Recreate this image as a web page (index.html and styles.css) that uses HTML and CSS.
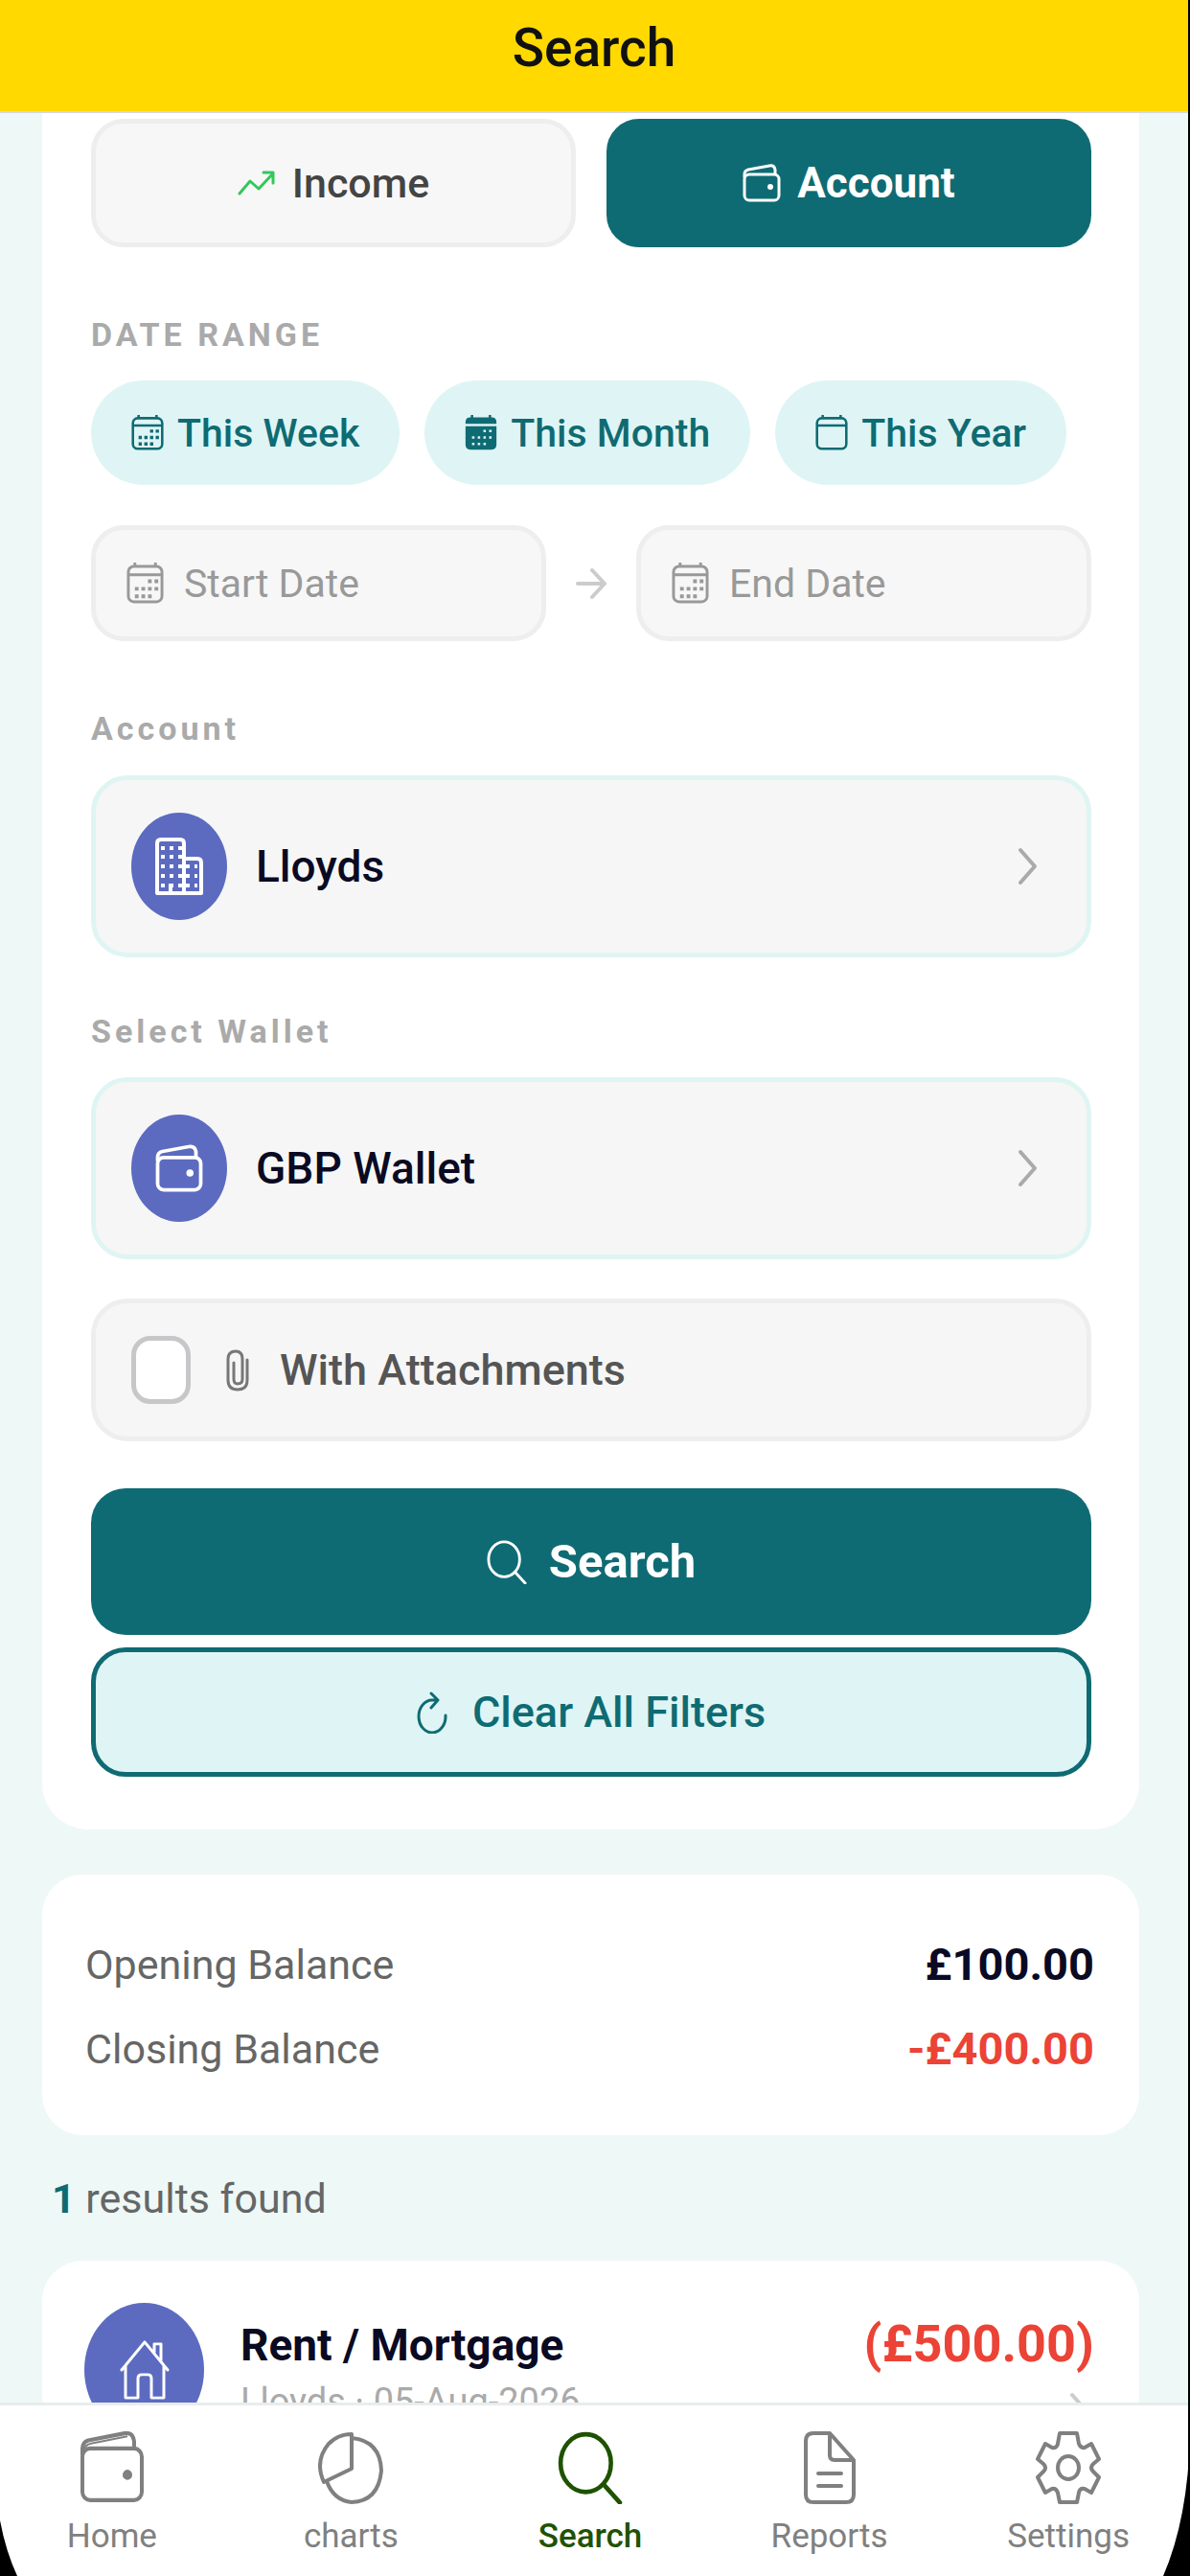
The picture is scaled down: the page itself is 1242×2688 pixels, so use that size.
FILE: index.html
```html
<!DOCTYPE html>
<html lang="en">
<head>
<meta charset="UTF-8" />
<meta name="viewport" content="width=device-width, initial-scale=1" />
<title>Search</title>
<link rel="stylesheet" href="styles.css">
</head>
<body>
  <!-- shared icons -->
  <svg class="sprite" aria-hidden="true">
    <symbol id="i-wallet" viewBox="0 0 68 72" preserveAspectRatio="none">
      <g fill="none" stroke="currentColor" stroke-width="4" stroke-linejoin="round">
        <rect x="3" y="17" width="62" height="51" rx="8" />
        <path d="M3 24V17Q3 11 9 9L47 2Q56 1 57 10V17" />
        <path d="M4 19Q6 13 12 12L50 5" stroke-width="2" />
      </g>
      <ellipse cx="50" cy="43" rx="5" ry="5" fill="currentColor" />
    </symbol>
    <symbol id="i-wallet-small" viewBox="0 0 40 40" preserveAspectRatio="none">
      <g fill="none" stroke="currentColor" stroke-width="3" stroke-linejoin="round">
        <rect x="2" y="11" width="36" height="27" rx="5" />
        <path d="M2 14V11Q2 7 6 6L28 2Q33 1 34 6V11" />
      </g>
      <circle cx="29" cy="24" r="3" fill="currentColor" />
    </symbol>
    <symbol id="i-calendar" viewBox="0 0 40 44" preserveAspectRatio="none">
      <g fill="none" stroke="currentColor" stroke-width="3">
        <rect x="2" y="4" width="36" height="38" rx="6" />
        <path d="M2 13H38M9 0V4M31 0V4" />
      </g>
      <path d="M23 20H34M9 28H34M9 36H27" fill="none" stroke="currentColor" stroke-width="4" stroke-dasharray="4 3" />
    </symbol>
    <symbol id="i-calendar-fill" viewBox="0 0 40 44" preserveAspectRatio="none">
      <path d="M9 0V4M31 0V4" stroke="currentColor" stroke-width="3" />
      <path d="M7 3H33Q39 3 39 9V11H1V9Q1 3 7 3ZM1 14H39V37Q39 43 33 43H7Q1 43 1 37Z" fill="currentColor" />
      <path d="M23 20H34M9 28H34M9 36H27" fill="none" stroke="#dff5f5" stroke-width="3" stroke-dasharray="3 4" />
    </symbol>
    <symbol id="i-calendar-clear" viewBox="0 0 40 44" preserveAspectRatio="none">
      <g fill="none" stroke="currentColor" stroke-width="3">
        <rect x="2" y="4" width="36" height="38" rx="6" />
        <path d="M2 13H38M9 0V4M31 0V4" />
      </g>
    </symbol>
    <symbol id="i-search" viewBox="0 0 44 48" preserveAspectRatio="none">
      <ellipse cx="19" cy="21" rx="17" ry="19" fill="none" stroke="currentColor" stroke-width="3" />
      <path d="M31 35L42 47" stroke="currentColor" stroke-width="3" stroke-linecap="round" />
    </symbol>
    <symbol id="i-chevron" viewBox="0 0 22 40">
      <path d="M3 3L18 20L3 37" fill="none" stroke="currentColor" stroke-width="4" stroke-linecap="round" stroke-linejoin="round" />
    </symbol>
  </svg>

  <div class="app">
    <header>
      <h1>Search</h1>
    </header>

    <main>
      <form class="card filters">
        <div class="types">
          <button type="button" class="type">
            <svg class="icon-trend" viewBox="0 0 40 28"><path d="M2 25L13 12L22 20L37 4M27 3H37V14" fill="none" stroke="currentColor" stroke-width="3" stroke-linecap="round" stroke-linejoin="round" /></svg>
            Income
          </button>
          <button type="button" class="type active">
            <svg class="icon-wallet"><use href="#i-wallet-small" /></svg>
            Account
          </button>
        </div>

        <h2 class="label">DATE RANGE</h2>
        <div class="chips">
          <button type="button" class="chip"><svg><use href="#i-calendar" /></svg>This Week</button>
          <button type="button" class="chip"><svg><use href="#i-calendar-fill" /></svg>This Month</button>
          <button type="button" class="chip"><svg><use href="#i-calendar-clear" /></svg>This Year</button>
        </div>

        <div class="dates">
          <label class="date">
            <svg><use href="#i-calendar" /></svg>
            <input type="text" placeholder="Start Date" aria-label="Start Date" />
          </label>
          <svg class="arrow" viewBox="0 0 32 34"><path d="M2 17H30M17 3L30 17L17 31" fill="none" stroke="currentColor" stroke-width="4" stroke-linecap="round" stroke-linejoin="round" /></svg>
          <label class="date">
            <svg><use href="#i-calendar" /></svg>
            <input type="text" placeholder="End Date" aria-label="End Date" />
          </label>
        </div>

        <h2 class="label">Account</h2>
        <button type="button" class="picker">
          <span class="badge">
            <svg class="icon-building" viewBox="0 0 50 60" preserveAspectRatio="none">
              <path d="M2 58V6Q2 2 6 2H26Q30 2 30 6V58ZM30 22H44Q48 22 48 26V58H30M16 58V48" fill="none" stroke="currentColor" stroke-width="4" stroke-linejoin="round" />
              <path d="M6 11H28M6 20H28M6 30H28M6 40H28M6 50H28M32 30H44M32 40H44M32 50H44" fill="none" stroke="currentColor" stroke-width="4" stroke-dasharray="4 5" />
            </svg>
          </span>
          <span class="name">Lloyds</span>
          <svg class="chevron"><use href="#i-chevron" /></svg>
        </button>

        <h2 class="label">Select Wallet</h2>
        <button type="button" class="picker">
          <span class="badge"><svg class="icon-badge-wallet"><use href="#i-wallet-small" /></svg></span>
          <span class="name">GBP Wallet</span>
          <svg class="chevron"><use href="#i-chevron" /></svg>
        </button>

        <label class="attach">
          <input type="checkbox" />
          <svg viewBox="0 0 24 44"><path d="M22 11V32Q22 42 12 42Q2 42 2 32V10Q2 2 10 2Q17 2 17 10V31Q17 36 12 36Q8 36 8 31V14" fill="none" stroke="currentColor" stroke-width="3" stroke-linecap="round" /></svg>
          With Attachments
        </label>

        <button type="submit" class="submit">
          <svg><use href="#i-search" /></svg>
          Search
        </button>
        <button type="reset" class="clear">
          <svg viewBox="0 0 32 44"><path d="M22 9H16A14 17 0 1 0 30 25M15 2L22 9L15 17" fill="none" stroke="currentColor" stroke-width="3" stroke-linecap="round" stroke-linejoin="round" /></svg>
          Clear All Filters
        </button>
      </form>

      <section class="card balances">
        <div class="row"><span>Opening Balance</span><strong>£100.00</strong></div>
        <div class="row"><span>Closing Balance</span><strong class="negative">-£400.00</strong></div>
      </section>

      <p class="count"><strong>1</strong> results found</p>

      <article class="card result">
        <span class="badge big">
          <svg viewBox="0 0 52 66" preserveAspectRatio="none"><path d="M2 33L26 3L50 33M6 28V63H19V42Q19 38 23 38H29Q33 38 33 42V63H46V28M36 14V5H43V23" fill="none" stroke="currentColor" stroke-width="3" stroke-linecap="round" stroke-linejoin="round" /></svg>
        </span>
        <div class="info">
          <h3>Rent / Mortgage</h3>
          <p>Lloyds · 05-Aug-2026</p>
        </div>
        <div class="amount">
          <strong>(£500.00)</strong>
          <svg><use href="#i-chevron" /></svg>
        </div>
      </article>
    </main>

    <nav>
      <a href="#home"><svg><use href="#i-wallet" /></svg>Home</a>
      <a href="#charts">
        <svg viewBox="0 0 68 76"><path d="M35 3V39L6 53Q-4 31 11 13Q21 3 35 3ZM35 7Q65 10 66 41Q63 73 35 74Q16 72 9 52" fill="none" stroke="currentColor" stroke-width="4" stroke-linejoin="round" /></svg>
        charts
      </a>
      <a href="#search" class="current"><svg><use href="#i-search" /></svg>Search</a>
      <a href="#reports">
        <svg viewBox="0 0 68 76"><path d="M17 2H34L59 30V66Q59 74 51 74H17Q9 74 9 66V10Q9 2 17 2ZM34 2V25Q34 30 39 30H59M22 44H46M22 57H46" fill="none" stroke="currentColor" stroke-width="4" stroke-linecap="round" stroke-linejoin="round" /></svg>
        Reports
      </a>
      <a href="#settings">
        <svg viewBox="0 0 68 76">
          <path d="M25 2H43L45 13Q47 18 51 17L58 13L66 29L60 34Q56 38 60 42L66 48L58 64L51 60Q46 59 45 64L43 74H25L23 64Q21 59 17 60L10 64L2 48L8 42Q12 38 8 34L2 29L10 13L17 17Q22 18 23 13Z" fill="none" stroke="currentColor" stroke-width="4" stroke-linejoin="round" />
          <ellipse cx="34" cy="38" rx="11" ry="12" fill="none" stroke="currentColor" stroke-width="4" />
        </svg>
        Settings
      </a>
    </nav>
  </div>

  <svg class="corner left" viewBox="0 0 18 58" aria-hidden="true"><path d="M0 0Q6 32 18 58H0Z" /></svg>
  <svg class="corner right" viewBox="0 0 28 148" aria-hidden="true"><path d="M28 0Q26 88 0 148H28Z" /></svg>
</body>
</html>
```
FILE: styles.css
```css
* {
  box-sizing: border-box;
}
body {
  margin: 0;
  background: #000;
  color: #0a0a23;
  font-family: Roboto, "Liberation Sans", sans-serif;
  font-size: 43px;
}
h1, h2, h3, p {
  margin: 0;
}
button, input {
  font: inherit;
  color: inherit;
}
button {
  border: none;
  cursor: pointer;
  display: flex;
  align-items: center;
  justify-content: center;
}
svg {
  flex: none;
  display: block;
}
.sprite {
  position: absolute;
  width: 0;
  height: 0;
}
.app {
  height: 100vh;
  margin-right: 2px;
  overflow: hidden;
  background: #eef8f7;
  display: flex;
  flex-direction: column;
}

header {
  background: #ffd900;
  height: 118px;
  flex: none;
  padding-top: 17px;
  border-bottom: 2px solid #d8d8dc;
}
header h1 {
  font-size: 55px;
  line-height: 66px;
  font-weight: 500;
  color: #111;
  text-align: center;
}

main {
  flex: 1;
  min-height: 0;
  overflow: hidden;
  padding: 0 51px 0 44px;
}
.card {
  background: #fff;
  border-radius: 42px;
}
.filters {
  border-radius: 0 0 48px 48px;
  padding: 6px 50px 55px 51px;
}
.types {
  display: grid;
  grid-template-columns: 1fr 1fr;
  gap: 32px;
}
.type {
  height: 134px;
  border: 5px solid #eee;
  border-radius: 34px;
  background: #f7f7f7;
  color: #444;
  font-weight: 500;
  gap: 17px;
}
.type.active {
  background: #0f6b73;
  border-color: #0f6b73;
  color: #fff;
  font-size: 44px;
  font-weight: 700;
}
.icon-trend {
  width: 40px;
  height: 28px;
  color: #34c759;
}
.icon-wallet {
  width: 40px;
  height: 40px;
}

.label {
  font-size: 34px;
  line-height: 40px;
  font-weight: 700;
  color: #aaa;
  letter-spacing: 4px;
}
.types + .label {
  margin: 71px 0 28px;
}
.chips {
  display: flex;
  gap: 26px;
  margin-bottom: 42px;
}
.chip {
  height: 109px;
  padding: 0 42px;
  border-radius: 55px;
  background: #dff5f5;
  color: #0f6b73;
  font-size: 41px;
  font-weight: 500;
  gap: 14px;
}
.chip svg {
  width: 34px;
  height: 37px;
}

.dates {
  display: flex;
  align-items: center;
  gap: 31px;
}
.date {
  flex: 1;
  min-width: 0;
  height: 121px;
  padding: 0 32px;
  border: 5px solid #eee;
  border-radius: 34px;
  background: #f7f7f7;
  display: flex;
  align-items: center;
  gap: 21px;
  color: #999;
}
.date svg {
  width: 39px;
  height: 43px;
}
.date input {
  width: 100%;
  min-width: 0;
  border: none;
  padding: 0;
  background: none;
  font-size: 41px;
}
.date input::placeholder {
  color: #999;
}
.arrow {
  width: 32px;
  height: 34px;
  color: #ccc;
}

.dates + .label {
  margin: 71px 0 29px;
}
.picker + .label {
  margin: 57px 0 28px;
}
.picker {
  width: 100%;
  height: 190px;
  padding: 0 50px 0 37px;
  border: 5px solid #dff5f3;
  border-radius: 38px;
  background: #f6f6f6;
  gap: 30px;
}
.badge {
  width: 100px;
  height: 112px;
  flex: none;
  border-radius: 50%;
  background: #5c6bc0;
  color: #fff;
  display: flex;
  align-items: center;
  justify-content: center;
}
.icon-building {
  width: 50px;
  height: 60px;
}
.icon-badge-wallet {
  width: 50px;
  height: 50px;
}
.picker .name {
  flex: 1;
  text-align: left;
  font-size: 46px;
  font-weight: 500;
}
.chevron {
  width: 22px;
  height: 40px;
  color: #aaa;
}

.attach {
  height: 149px;
  margin: 41px 0 49px;
  padding: 0 37px;
  border: 5px solid #eee;
  border-radius: 38px;
  background: #f6f6f6;
  color: #555;
  font-size: 45px;
  font-weight: 500;
  display: flex;
  align-items: center;
}
.attach input {
  appearance: none;
  width: 62px;
  height: 71px;
  margin: 0 37px 0 0;
  border: 5px solid #c7c7ca;
  border-radius: 20px;
  background: #fff;
}
.attach svg {
  width: 24px;
  height: 44px;
  margin-right: 32px;
  color: #777;
}
.submit, .clear {
  width: 100%;
  border-radius: 36px;
}
.submit {
  height: 153px;
  margin-bottom: 13px;
  background: #0f6b73;
  color: #fff;
  font-size: 49px;
  font-weight: 700;
  gap: 23px;
}
.submit svg {
  width: 42px;
  height: 46px;
}
.clear {
  height: 135px;
  border: 5px solid #0f6b73;
  background: #dff5f5;
  color: #0f6b73;
  font-size: 45px;
  font-weight: 500;
  gap: 26px;
}
.clear svg {
  width: 32px;
  height: 44px;
}

.balances {
  margin-top: 47px;
  padding: 50px 47px 46px 45px;
}
.row {
  display: flex;
  justify-content: space-between;
  line-height: 88px;
  color: #666;
}
.row strong {
  font-size: 47px;
  font-weight: 700;
  color: #0a0a23;
}
.row .negative {
  color: #eb4336;
}
.count {
  margin: 40px 10px 39px;
  line-height: 52px;
  color: #666;
}
.count strong {
  color: #0f6b73;
}
.result {
  display: flex;
  padding: 44px 47px 45px 44px;
}
.badge.big {
  width: 125px;
  height: 140px;
}
.badge.big svg {
  width: 52px;
  height: 64px;
}
.info {
  flex: 1;
  padding: 16px 0 0 38px;
}
.info h3 {
  font-size: 46px;
  line-height: 56px;
  font-weight: 700;
}
.info p {
  font-size: 38px;
  line-height: 62px;
  color: #aaa;
}
.amount {
  padding-top: 13px;
  display: flex;
  flex-direction: column;
  align-items: flex-end;
  gap: 20px;
}
.amount strong {
  font-size: 54px;
  line-height: 60px;
  color: #eb4336;
}
.amount svg {
  width: 22px;
  height: 40px;
  margin-right: 4px;
  color: #ccc;
}

nav {
  flex: none;
  height: 181px;
  margin-left: -8px;
  border-top: 3px solid #e8ecec;
  background: #fff;
  padding-top: 27px;
  display: grid;
  grid-template-columns: repeat(5, 1fr);
}
nav a {
  display: flex;
  flex-direction: column;
  align-items: center;
  gap: 13px;
  font-size: 35px;
  line-height: 42px;
  color: #808080;
  text-decoration: none;
}
nav svg {
  width: 68px;
  height: 76px;
}
nav .current {
  color: #1f5200;
  font-weight: 500;
}

/* rounded screen corners */
.corner {
  position: absolute;
  bottom: 0;
}
.corner.left {
  left: 0;
  width: 18px;
  height: 58px;
}
.corner.right {
  right: 0;
  width: 28px;
  height: 148px;
}
```
